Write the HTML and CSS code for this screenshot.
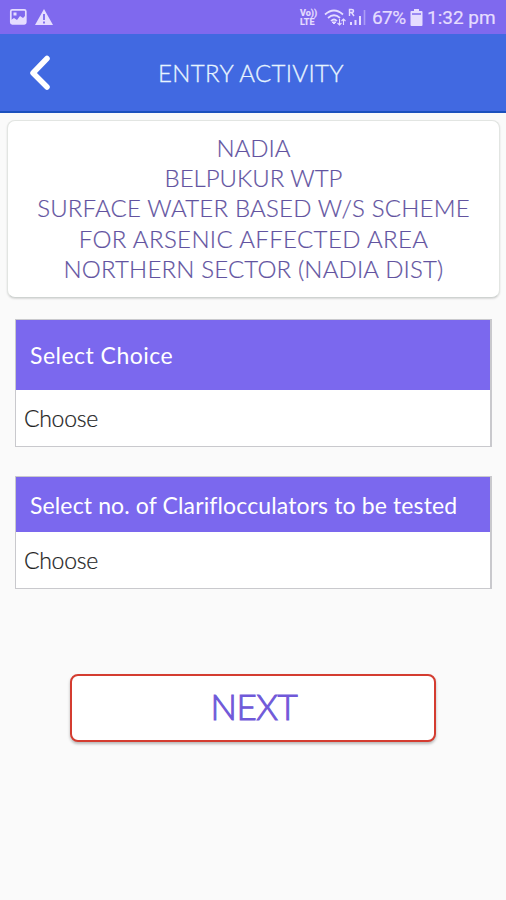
FILE: index.html
```html
<!DOCTYPE html>
<html lang="en">
<head>
<meta charset="utf-8">
<title>Entry Activity</title>
<link rel="stylesheet" href="styles.css">
</head>
<body>
<div class="status">
  <svg class="notices" width="46" height="20" viewBox="0 0 46 20">
    <rect x="1.800" y="1.800" width="15" height="14" rx="1.500" fill="none" stroke="#e5ddff" stroke-width="1.700"/>
    <path d="M2 15v-3l3-2 3 2 3-4 3 2 3-3v8zM4.500 4.500h3v3h-3z" fill="#e5ddff"/>
    <path d="M35 1 44 17H26z" fill="#e5ddff"/>
    <path d="M35 6v6M35 13.500v2" stroke="#7b68ee" stroke-width="1.800"/>
  </svg>
  <div class="signals">
    <div class="lte"><span>Vo))</span><span>LTE</span></div>
    <svg class="radio" width="46" height="20" viewBox="0 0 46 20" fill="none" stroke="#e5ddff">
      <path d="M1 6.500q9-8 18 0M4 10q6-5.500 12 0M7 13q3-3 6 0" stroke-width="1.700"/>
      <path d="m8 14 2 2 2-2z" fill="#e5ddff"/>
      <path d="M15.500 11v6m-2-2 2 2 2-2M19.500 17v-6m-2 2 2-2 2 2" stroke-width="1.100"/>
      <path d="M25.500 8V1.500h2q2 0 2 1.500t-2 1.500h-2m2 0L30 8" stroke-width="1.400"/>
      <path d="M27 17v-3M31.500 17v-5M36 17V8" stroke-width="2"/>
      <path d="M40.500 17V2" stroke-width="1.600" opacity=".45"/>
    </svg>
    <span class="percent">67%</span>
    <svg class="battery" width="13" height="18" viewBox="0 0 13 18"><path d="M4 0h5v2h2.500q1 0 1 1v13q0 1-1 1h-10q-1 0-1-1V3q0-1 1-1H4z" fill="#e5ddff"/><path d="M2 4h9v2H2z" fill="#9a89f3"/></svg>
    <span class="clock">1:32 pm</span>
  </div>
</div>
<header class="bar">
  <svg class="back" width="24" height="38" viewBox="0 0 24 38"><path d="M20 4.500 6 19l14 14" fill="none" stroke="#fff" stroke-width="5.500" stroke-linejoin="round" stroke-linecap="round"/></svg>
  <h1 class="title">ENTRY ACTIVITY</h1>
</header>
<main>
  <section class="scheme">
    <span class="l1">NADIA</span>
    <span class="l2">BELPUKUR WTP</span>
    <span class="l3">SURFACE WATER BASED W/S SCHEME</span>
    <span class="l4">FOR ARSENIC AFFECTED AREA</span>
    <span class="l5">NORTHERN SECTOR (NADIA DIST)</span>
  </section>
  <section class="field choice">
    <div class="label"><span>Select Choice</span></div>
    <div class="value"><span>Choose</span></div>
  </section>
  <section class="field count">
    <div class="label"><span>Select no. of Clariflocculators to be tested</span></div>
    <div class="value"><span>Choose</span></div>
  </section>
  <button class="next"><span>NEXT</span></button>
</main>
</body>
</html>
```
FILE: styles.css
```css
* { box-sizing: border-box; }
body { margin: 0; height: 900px; background: #fafafa; font-family: Lato, sans-serif; overflow: hidden; }
.status { height: 34px; padding: 2px 11px 0 9px; display: flex; justify-content: space-between; align-items: center; background: #7f69ee; color: #e5ddff; }
.signals { display: flex; align-items: center; font: 19px/32px Roboto, sans-serif; -webkit-text-stroke: .2px; }
.lte { width: 19px; margin-right: 5px; display: flex; flex-direction: column; font: bold 9px/9px Roboto, sans-serif; }
.radio { margin-right: 2px; }
.percent { width: 36px; letter-spacing: -.6px; }
.battery { margin: 0 4px 0 2px; }
.clock { width: 68px; white-space: nowrap; }
.bar { height: 79px; display: flex; align-items: center; background: #4169e1; border-bottom: 2px solid #1b50bd; }
.back { margin-left: 27px; }
.title { margin: 1px 0 0 107px; font-size: 24px; font-weight: 300; line-height: 30px; letter-spacing: .35px; color: #e7f5ff; white-space: nowrap; -webkit-text-stroke: .3px; }
.scheme { height: 178px; margin: 7px 6px 0 7px; padding-top: 12px; display: flex; flex-direction: column; align-items: center; background: #fff; border: 1px solid #e2e5e2; border-bottom-color: #cfd3d1; border-radius: 8px; box-shadow: 0 1px 2px #0002; color: #62539f; font-size: 24px; font-weight: 300; line-height: 30.2px; white-space: nowrap; -webkit-text-stroke: .2px; }
.l3 { letter-spacing: .2px; }
.l4 { letter-spacing: .37px; }
.l5 { letter-spacing: .17px; }
.field { margin: 0 14px 0 15px; border: 1px solid #c9c9cd; border-right-width: 2px; background: #fff; }
.choice { height: 128px; margin-top: 21px; }
.count { height: 113px; margin-top: 29px; }
.label { display: flex; align-items: center; padding-left: 14px; background: #7b68ee; color: #fff; font-size: 23px; white-space: nowrap; }
.choice .label { height: 70px; letter-spacing: .48px; }
.count .label { height: 55px; letter-spacing: .13px; }
.value { height: 56px; display: flex; align-items: center; padding-left: 8px; font-size: 23px; font-weight: 300; letter-spacing: -.3px; color: #222; -webkit-text-stroke: .2px; }
.next { display: flex; align-items: center; justify-content: center; width: 366px; height: 68px; margin: 85px 0 0 70px; padding: 0 0 4px 2px; border: 2px solid #d43c30; border-radius: 8px; background: #fff; box-shadow: 0 2px 3px #0004; color: #7059d9; font: 300 35px/40px Lato, sans-serif; letter-spacing: -.5px; -webkit-text-stroke: 1px; }
```
